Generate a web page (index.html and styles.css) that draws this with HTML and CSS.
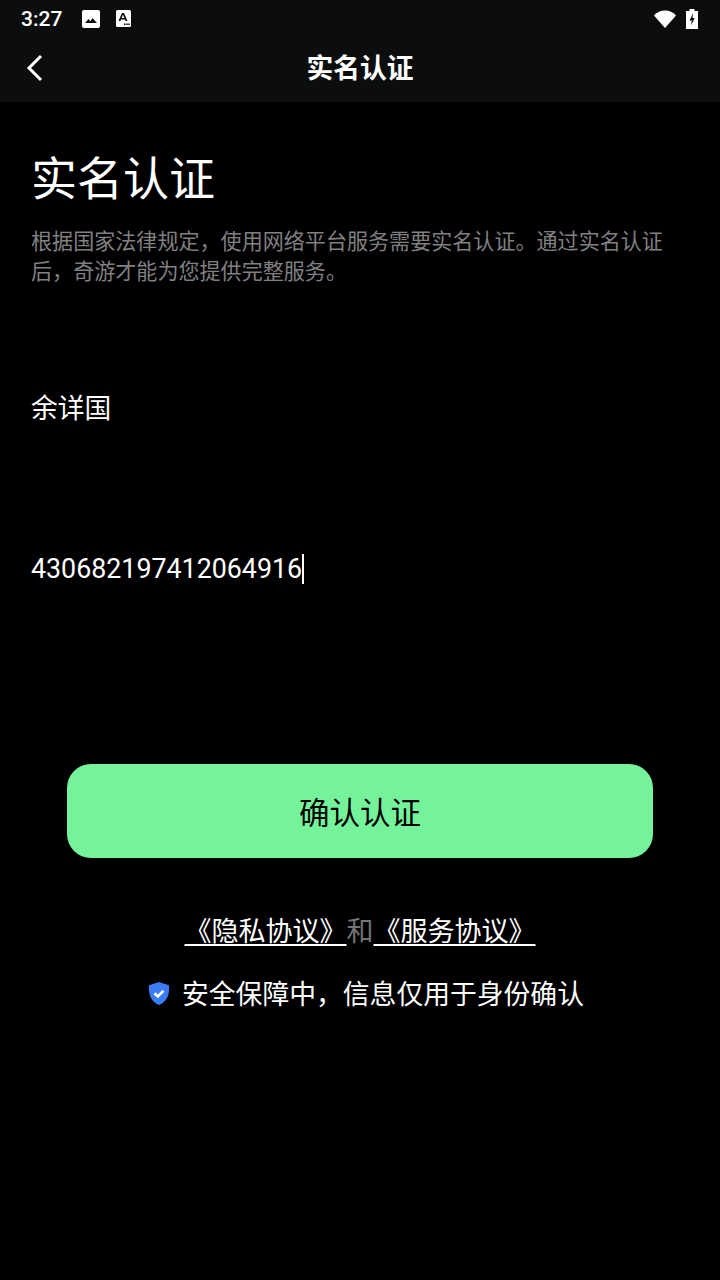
FILE: index.html
```html
<!DOCTYPE html>
<html lang="zh-CN">
<head>
    <meta charset="UTF-8">
    <meta name="viewport" content="width=device-width, initial-scale=1.0">
    <title>实名认证</title>
    <link rel="stylesheet" href="styles.css">
</head>
<body>
    <div class="status-bar">
        <span class="status-time">3:27</span>
        <svg class="status-icon" width="18" height="18" viewBox="0 0 18 18"><rect width="18" height="18" rx="2" fill="#fff"/><path d="M3 13l3.500-4 2 2.200 2-3.200 4.500 5z" fill="#0c0e0e"/></svg>
        <svg class="status-icon icon-a" width="15" height="17" viewBox="0 0 15 17"><rect width="15" height="17" rx="1.500" fill="#fff"/><path d="M2.500 11L6 3h2l3.500 8H9.600L9 9.400H5L4.400 11zM5.600 7.900h2.800L7 4.800z" fill="#0c0e0e"/><path d="M8 13.500h1.500V15H8zM10.200 13.500h1.500V15h-1.500zM12.400 13.500h1.500V15h-1.500z" fill="#0c0e0e"/></svg>
        <span class="status-space"></span>
        <svg class="wifi" width="22" height="18" viewBox="0 0 22 18"><path d="M0 5.500C3 2.200 6.800.5 11 .5s8 1.700 11 5L11 18z" fill="#fff"/></svg>
        <svg class="battery" width="12" height="20" viewBox="0 0 12 20"><path d="M3.500 0h5v2H12v18H0V2h3.500z" fill="#fff"/><path d="M7.200 4L3.500 11.500h2.300L5 16.500l3.700-7.500H6.400z" fill="#0c0e0e"/></svg>
    </div>
    <header class="nav-bar">
        <svg class="back" width="18" height="28" viewBox="0 0 18 28"><path d="M15 2L3 14l12 12" fill="none" stroke="#fff" stroke-width="3"/></svg>
        <h2 class="nav-title">实名认证</h2>
    </header>

    <main class="content">
        <h1 class="title">实名认证</h1>
        <p class="desc">根据国家法律规定，使用网络平台服务需要实名认证。通过实名认证后，奇游才能为您提供完整服务。</p>
        <div class="field field-name">余详国</div>
        <div class="field field-id">430682197412064916<span class="caret"></span></div>
        <button class="submit">确认认证</button>
        <div class="links">
            <a class="link">《隐私协议》</a><span class="and">和</span><a class="link">《服务协议》</a>
        </div>
        <div class="safe">
            <svg class="shield" width="22" height="23" viewBox="0 0 22 23"><path d="M11 0l10 3.200c.6 8.500-1 15.800-10 19.800C2 19 .4 11.700 1 3.200z" fill="#3a7cf5"/><path d="M6.500 11.200l3.300 3.200 5.700-5.600" fill="none" stroke="#fff" stroke-width="2.600"/></svg>
            <span>安全保障中，信息仅用于身份确认</span>
        </div>
    </main>
</body>
</html>
```

FILE: styles.css
```css
* {
    box-sizing: border-box;
}

body {
    margin: 0;
    width: 720px;
    height: 1280px;
    overflow: hidden;
    background-color: #000;
    color: #fff;
    font-family: Roboto, "Noto Sans CJK SC", sans-serif;
}

.status-bar {
    height: 37px;
    padding: 0 22px 0 21px;
    display: flex;
    align-items: center;
    background-color: #0c0e0e;
}

.status-time {
    font-size: 21px;
    font-weight: 500;
    width: 61px;
}

.icon-a {
    margin-left: 16px;
}

.status-space {
    flex: 1;
}

.battery {
    margin-left: 10px;
}

.nav-bar {
    height: 65px;
    padding: 0 0 7px 26px;
    display: flex;
    align-items: center;
    background-color: #0c0e0e;
}

.back {
    margin-top: 4px;
}

.nav-title {
    margin: 0;
    flex: 1;
    padding-right: 44px;
    text-align: center;
    font-size: 26.8px;
    font-weight: 700;
}

.content {
    padding: 0 31px;
    display: flex;
    flex-direction: column;
}

.title {
    margin: 49px 0 0 0;
    font-size: 46px;
    font-weight: 400;
    line-height: 56px;
}

.desc {
    margin: 20px 0 0;
    font-size: 21.07px;
    line-height: 30px;
    color: #808080;
}

.field {
    font-size: 26.8px;
    line-height: 36px;
}

.field-name {
    margin-top: 104px;
}

.field-id {
    margin-top: 124px;
    display: flex;
    align-items: center;
}

.caret {
    width: 2px;
    height: 30px;
    background-color: #fff;
}

.submit {
    margin: 177px 36px 0;
    height: 94px;
    border: none;
    border-radius: 24px;
    background-color: #74f39b;
    color: #000;
    font-family: inherit;
    font-size: 30.5px;
}

.links {
    margin-top: 55px;
    display: flex;
    justify-content: center;
    font-size: 27px;
    line-height: 38px;
}

.link {
    color: #fff;
    text-decoration: underline;
    text-underline-offset: 3px;
    text-decoration-thickness: 2px;
}

.and {
    color: #757575;
}

.safe {
    margin: 26px 0 0 12px;
    display: flex;
    justify-content: center;
    align-items: center;
    gap: 12px;
    font-size: 26.8px;
    line-height: 36px;
}

.shield {
    margin-bottom: 4px;
}
```
